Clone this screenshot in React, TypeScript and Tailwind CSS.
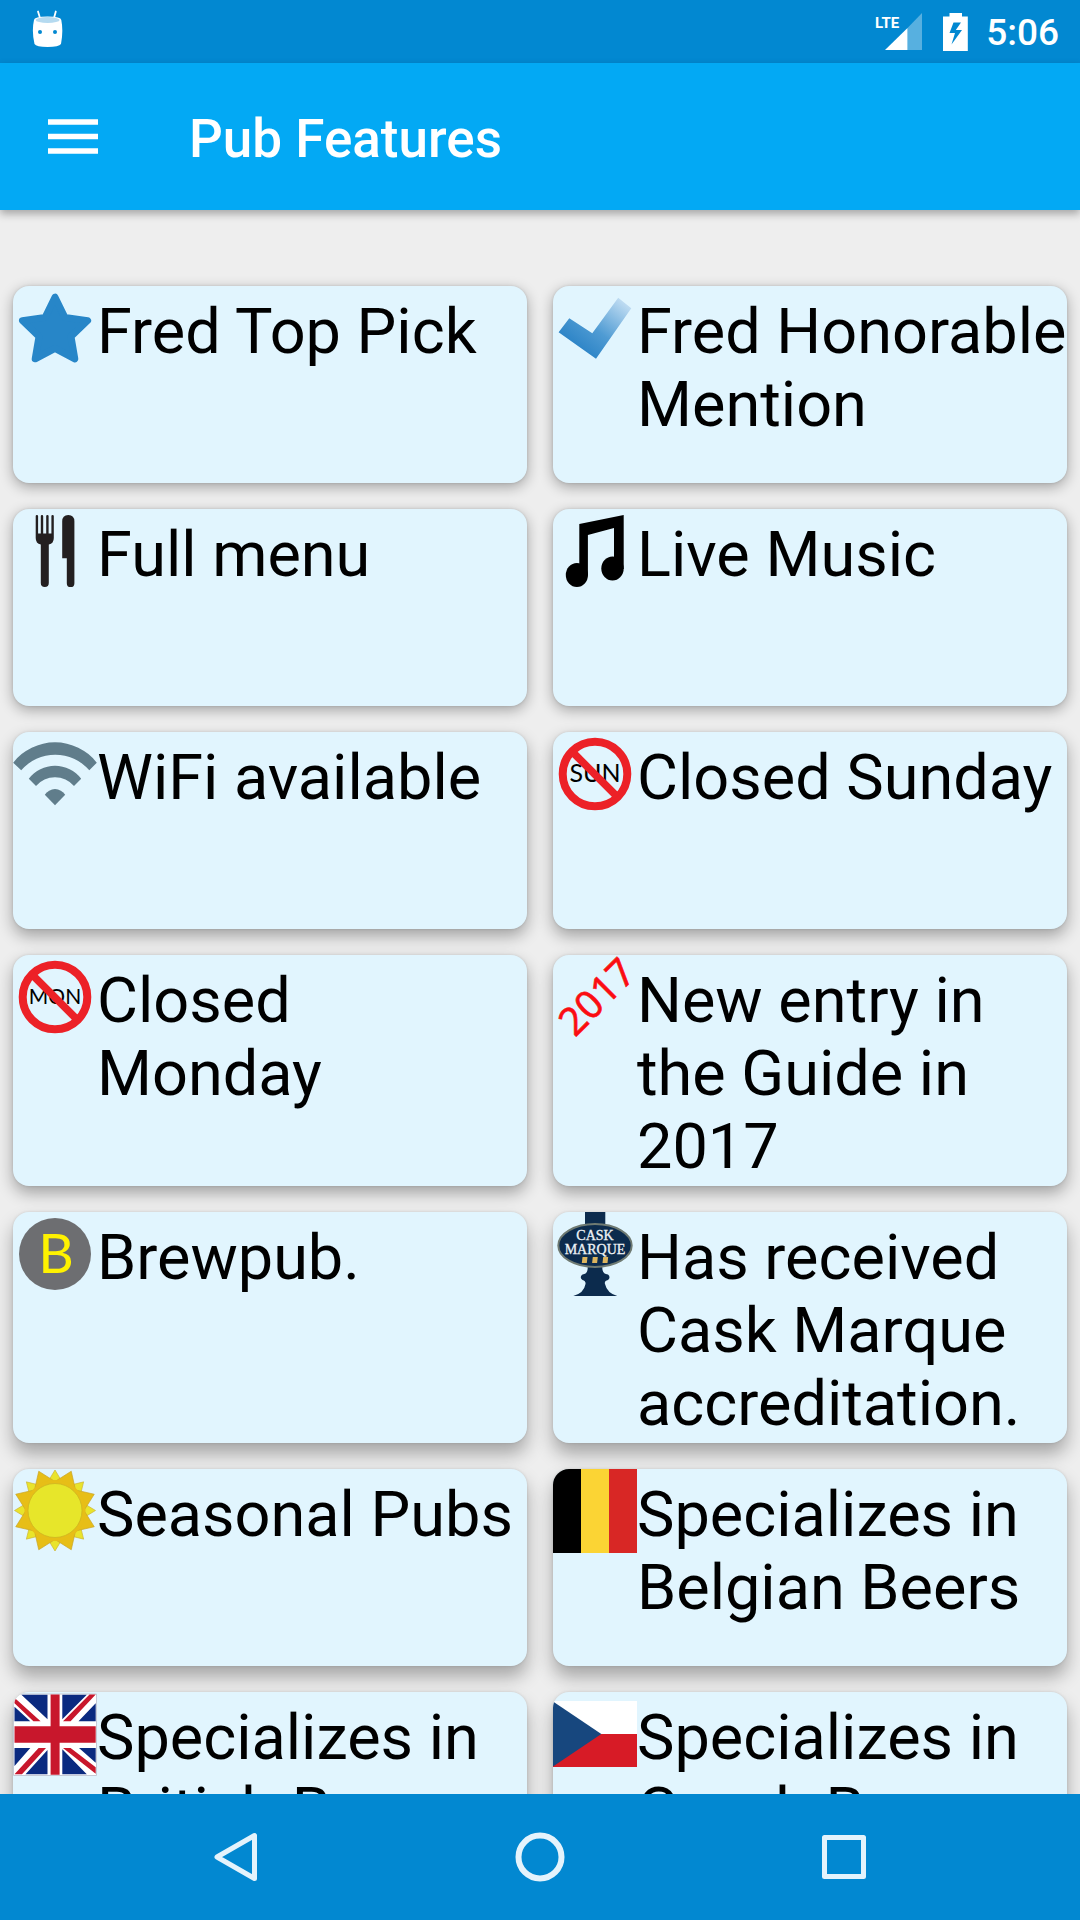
import type { ReactNode } from "react";

function Icon({ children }: { children: ReactNode }) {
  return (
    <svg viewBox="0 0 84 84" className="size-[84px] shrink-0 overflow-visible" aria-hidden="true">
      {children}
    </svg>
  );
}

const SunIcon = () => {
  const star = (outer: number, inner: number, offset: number) =>
    Array.from({ length: 16 }, (_, i) => {
      const r = i % 2 === 0 ? outer : inner;
      const a = ((i * 22.5 + offset) * Math.PI) / 180;
      return `${(42 + r * Math.sin(a)).toFixed(2)},${(41.5 - r * Math.cos(a)).toFixed(2)}`;
    }).join(" ");
  return (
    <Icon>
      <polygon points={star(40.5, 26, 0)} fill="#e9e42b" stroke="#cdb43a" strokeWidth="0.7" />
      <polygon points={star(42.5, 29, 22.5)} fill="#e7be17" stroke="#c9a52a" strokeWidth="0.7" />
      <circle cx="42" cy="41.5" r="30.5" fill="#e7be17" />
      <circle cx="42" cy="41.5" r="27" fill="#e7e62a" stroke="#cfb422" strokeWidth="0.8" />
    </Icon>
  );
};

const StarIcon = () => (
  <Icon>
    <path
      d="M42 11.2 L32.2 31.4 L9.4 34.6 L26 50.6 L22.2 72.8 L42 62.4 L61.8 72.8 L58 50.6 L74.6 34.6 L51.8 31.4Z"
      fill="#2786c8"
      stroke="#2786c8"
      strokeWidth="7"
      strokeLinejoin="round"
    />
  </Icon>
);

const CheckIcon = () => (
  <Icon>
    <defs>
      <linearGradient id="tick" x1="30" y1="68" x2="72" y2="14" gradientUnits="userSpaceOnUse">
        <stop offset="0" stopColor="#2b83c6" />
        <stop offset="0.4" stopColor="#4f9bd3" />
        <stop offset="1" stopColor="#c6e0f4" />
      </linearGradient>
    </defs>
    <path d="M16.3 32.3 L5.6 46.3 L43 72.7 L78.3 22.3 L65.2 11.7 L39.3 47.3Z" fill="url(#tick)" />
  </Icon>
);

const MenuIcon = () => (
  <Icon>
    <g fill="#231f20">
      <path d="M22.7 7q0-1 1.2-1t1.2 1v17.5h2.7V7q0-1 1.2-1t1.2 1v17.5h3V7q0-1 1.2-1t1.2 1v17.5h2.8V7q0-1 1.2-1t1.2 1v22q0 5.5-5 6.5v38.6q0 4-4 4t-4-4V35.5q-5.1-1-5.1-6.5z" />
      <path d="M49.2 49.3V12.5q0-6.5 6.1-6.5t6.1 6.5V74.2q0 3.9-3.8 3.9t-3.8-3.9V49.3z" />
    </g>
  </Icon>
);

const MusicIcon = () => (
  <Icon>
    <path d="M26.3 15 L70.7 6 V60 H61 V19 L34.9 26 V66 H26.3Z" />
    <ellipse cx="23.9" cy="66" rx="11.1" ry="12" />
    <ellipse cx="59.5" cy="59.4" rx="11.2" ry="12" />
  </Icon>
);

const WifiIcon = () => (
  <Icon>
    <g fill="#607d8b">
      <path d="M0.2 30.7A53 53 0 0 1 83.8 30.7L76.3 38.3A45 45 0 0 0 8.2 38.3Z" />
      <path d="M15.8 46.7A33 33 0 0 1 68.2 46.7L61 54A25 25 0 0 0 23 54Z" />
      <path d="M31.8 62.8A12 12 0 0 1 52.2 62.8L42 73.3Z" />
    </g>
  </Icon>
);

const ClosedIcon = ({ day, size, y }: { day: string; size: number; y: number }) => (
  <Icon>
    <text x="42" y={y} textAnchor="middle" fontFamily="Lato, sans-serif" fontSize={size}>
      {day}
    </text>
    <circle cx="42" cy="42" r="32.3" fill="none" stroke="#ec2127" strokeWidth="8" />
    <path d="M19 19.5L64 64.5" stroke="#ec2127" strokeWidth="7.5" />
  </Icon>
);

const NewIcon = () => (
  <Icon>
    <text
      transform="translate(22 83) rotate(-45)"
      fontFamily="'Noto Sans', sans-serif"
      fontSize="39"
      fill="#fb0d12"
      stroke="#fb0d12"
      strokeWidth="0.6"
    >
      2017
    </text>
  </Icon>
);

const BrewpubIcon = () => (
  <Icon>
    <circle cx="42" cy="42" r="36" fill="#6d6e71" />
    <text x="43" y="61" textAnchor="middle" fontFamily="Lato, sans-serif" fontSize="55" fill="#fff200">
      B
    </text>
  </Icon>
);

const CaskIcon = () => (
  <Icon>
    <path
      d="M32 0H52.3V14H32Z M34.7 50H49.3V56Q49.3 62 55 62.5Q58 65 55 68Q51 69 52 72Q54 81 64.3 84H20.3Q31 81 32.500 72Q33 69 29.500 68Q26 65 29.500 62.500Q34.700 62 34.700 56Z"
      fill="#0c2b4d"
    />
    <ellipse cx="42" cy="33.5" rx="36.7" ry="21.5" fill="#0c2b4d" stroke="#6f7a72" strokeWidth="2" />
    <g fontFamily="'Liberation Serif', serif" fontSize="14" fill="#eef3f6" stroke="#eef3f6" strokeWidth="0.3" textAnchor="middle">
      <text x="42" y="28">CASK</text>
      <text x="42" y="42">MARQUE</text>
    </g>
    <path d="M29.5 45h5l-.7 6h-5z M39.8 45h5l-.7 6h-5z M50.2 45h5l-.7 6h-5z" fill="#dcb45e" />
  </Icon>
);

const BelgiumIcon = () => (
  <Icon>
    <path d="M0 0H28V84H0Z" fill="#000" />
    <path d="M28 0H56V84H28Z" fill="#fbd434" />
    <path d="M56 0H84V84H56Z" fill="#d82725" />
  </Icon>
);

const BritainIcon = () => (
  <Icon>
    <path d="M0.5 2H83.5V83.5H0.5Z" fill="#fff" stroke="#c5cad6" />
    <path
      fill="#0a2a80"
      d="M8.4 2.7H34.5V27.3Z M1.5 14.7L17.3 29.3H1.5Z M49.3 2.7H73.8L49.3 27.3Z M82.7 11.3V29.3H65.5Z M1.5 56H17.3L1.5 74Z M34.5 58V82.3H12.5Z M49.3 57.3L73.8 82.3H49.3Z M66 56H82.7V70.7Z"
    />
    <path
      fill="#c8172c"
      d="M37.6 2.5H46.6V34.3H82.7V50.7H46.6V82.7H37.6V50.7H1.5V34.3H37.6Z M1.5 5.7V11.3L20.4 29.3H27.6Z M76.5 2.5H82.7L57.6 29.3H50Z M25.6 56H33L9 82.3H1.5Z M50 56H57.6L82.7 75.3V81.8Z"
    />
  </Icon>
);

const CzechIcon = () => (
  <Icon>
    <path d="M0 9H84V42H0Z" fill="#fff" />
    <path d="M0 42H84V75H0Z" fill="#d71b26" />
    <path d="M0 9.5L48.3 42L0 74.5Z" fill="#17477e" />
  </Icon>
);

// Elevation shadows get deeper the further a card sits from the top light.
const SHADOW = {
  high: "shadow-[0_4px_14px_rgba(0,0,0,0.32),0_0_3px_rgba(0,0,0,0.12)]",
  mid: "shadow-[0_7px_16px_rgba(0,0,0,0.32),0_0_3px_rgba(0,0,0,0.12)]",
  low: "shadow-[0_11px_18px_rgba(0,0,0,0.3),0_0_3px_rgba(0,0,0,0.12)]",
};

const FEATURES: { label: string; icon: ReactNode; shadow: string }[] = [
  { label: "Fred Top Pick", icon: <StarIcon />, shadow: SHADOW.high },
  { label: "Fred Honorable Mention", icon: <CheckIcon />, shadow: SHADOW.high },
  { label: "Full menu", icon: <MenuIcon />, shadow: SHADOW.high },
  { label: "Live Music", icon: <MusicIcon />, shadow: SHADOW.high },
  { label: "WiFi available", icon: <WifiIcon />, shadow: SHADOW.mid },
  { label: "Closed Sunday", icon: <ClosedIcon day="SUN" size={25} y={50} />, shadow: SHADOW.mid },
  { label: "Closed Monday", icon: <ClosedIcon day="MON" size={21} y={49} />, shadow: SHADOW.mid },
  { label: "New entry in the Guide in 2017", icon: <NewIcon />, shadow: SHADOW.mid },
  { label: "Brewpub.", icon: <BrewpubIcon />, shadow: SHADOW.low },
  { label: "Has received Cask Marque accreditation.", icon: <CaskIcon />, shadow: SHADOW.low },
  { label: "Seasonal Pubs", icon: <SunIcon />, shadow: SHADOW.low },
  { label: "Specializes in Belgian Beers", icon: <BelgiumIcon />, shadow: SHADOW.low },
  { label: "Specializes in British Beers", icon: <BritainIcon />, shadow: SHADOW.low },
  { label: "Specializes in Czech Beers", icon: <CzechIcon />, shadow: SHADOW.low },
];

function StatusBar() {
  return (
    <div className="flex h-[63px] shrink-0 items-center justify-between bg-[#0288d1] pr-[21px] pl-8 text-white">
      <svg width="32" height="40" viewBox="0 0 32 40" className="mb-1.5" aria-hidden="true">
        <path d="M6 2.5L8 9M23.8 2.5L22 9" stroke="#fff" strokeWidth="1.8" strokeLinecap="round" />
        <path d="M2 11Q2 7.5 15.6 7.5T29.3 11Q31.5 22 29 35Q27 38 15.6 38T2.5 35Q-.5 22 2 11Z" fill="#fff" />
        <ellipse cx="15.6" cy="11" rx="12" ry="3" fill="#b5daf0" />
        <circle cx="8" cy="23" r="2" fill="#0288d1" />
        <circle cx="23" cy="23" r="2" fill="#0288d1" />
      </svg>
      <div className="flex items-center">
        <svg width="48" height="38" viewBox="0 0 48 38" className="mr-5" aria-label="LTE signal" role="img">
          <path d="M32.5 15L47 0V37H32.5Z" fill="#57b0e0" />
          <path d="M10 37L32.5 15V37Z" fill="#fff" />
          <text x="0" y="15" fontFamily="Roboto, sans-serif" fontWeight="700" fontSize="15" fill="#fff">
            LTE
          </text>
        </svg>
        <svg width="25" height="38" viewBox="0 0 25 38" className="mr-[18px]" aria-label="Battery charging" role="img">
          <path
            fillRule="evenodd"
            fill="#fff"
            d="M6.5 0H19V3.5H24.8V38H0V3.5H6.5Z M18 9.5H10.5L6.5 20H12L8.5 31.5L19 17H12.8Z"
          />
        </svg>
        <span className="pt-0.5 text-[37px] leading-none font-medium">5:06</span>
      </div>
    </div>
  );
}

export default function App() {
  return (
    <div className="flex h-screen flex-col overflow-hidden bg-[#eeeeee] font-['Roboto',sans-serif] text-black">
      <StatusBar />
      <header className="z-10 flex h-[147px] shrink-0 items-center bg-[#03a9f4] pl-12 text-white shadow-[0_4px_8px_rgba(0,0,0,0.3)]">
        <button type="button" aria-label="Open navigation menu" className="mr-[91px] block">
          <svg width="50" height="36" viewBox="0 0 50 36" aria-hidden="true">
            <path d="M0 3H50M0 17.5H50M0 32H50" stroke="#fff" strokeWidth="5.6" />
          </svg>
        </button>
        <h1 className="pt-1 text-[53px] leading-[62px] font-medium">Pub Features</h1>
      </header>

      <main className="min-h-0 flex-1 overflow-hidden px-[13px] pt-[76px]">
        <ul className="grid grid-cols-2 gap-[26px]">
          {FEATURES.map((f) => (
            <li
              key={f.label}
              className={`flex min-h-[197px] items-start overflow-hidden rounded-[16px] bg-[#e1f5fe] ${f.shadow}`}
            >
              {f.icon}
              <span className="min-w-0 flex-1 pt-[9px] pb-[3px] text-[63px] leading-[73px]">{f.label}</span>
            </li>
          ))}
        </ul>
      </main>

      <nav className="z-10 flex h-[126px] shrink-0 items-center justify-center gap-[94px] bg-[#0288d1]">
        <button type="button" aria-label="Back" className="flex w-[210px] justify-center">
          <svg width="50" height="50" viewBox="0 0 50 50" fill="none" stroke="#e4f3fc" strokeWidth="5" strokeLinejoin="round" aria-hidden="true">
            <path d="M43.5 3.5V46.5L6 25Z" />
          </svg>
        </button>
        <button type="button" aria-label="Home" className="flex w-[210px] justify-center">
          <svg width="50" height="50" viewBox="0 0 50 50" fill="none" stroke="#e4f3fc" strokeWidth="6" aria-hidden="true">
            <circle cx="25" cy="25" r="21.5" />
          </svg>
        </button>
        <button type="button" aria-label="Recent apps" className="flex w-[210px] justify-center">
          <svg width="50" height="50" viewBox="0 0 50 50" fill="none" stroke="#e4f3fc" strokeWidth="5" strokeLinejoin="round" aria-hidden="true">
            <path d="M5.5 5.5H44.5V44.500H5.500Z" />
          </svg>
        </button>
      </nav>
    </div>
  );
}
